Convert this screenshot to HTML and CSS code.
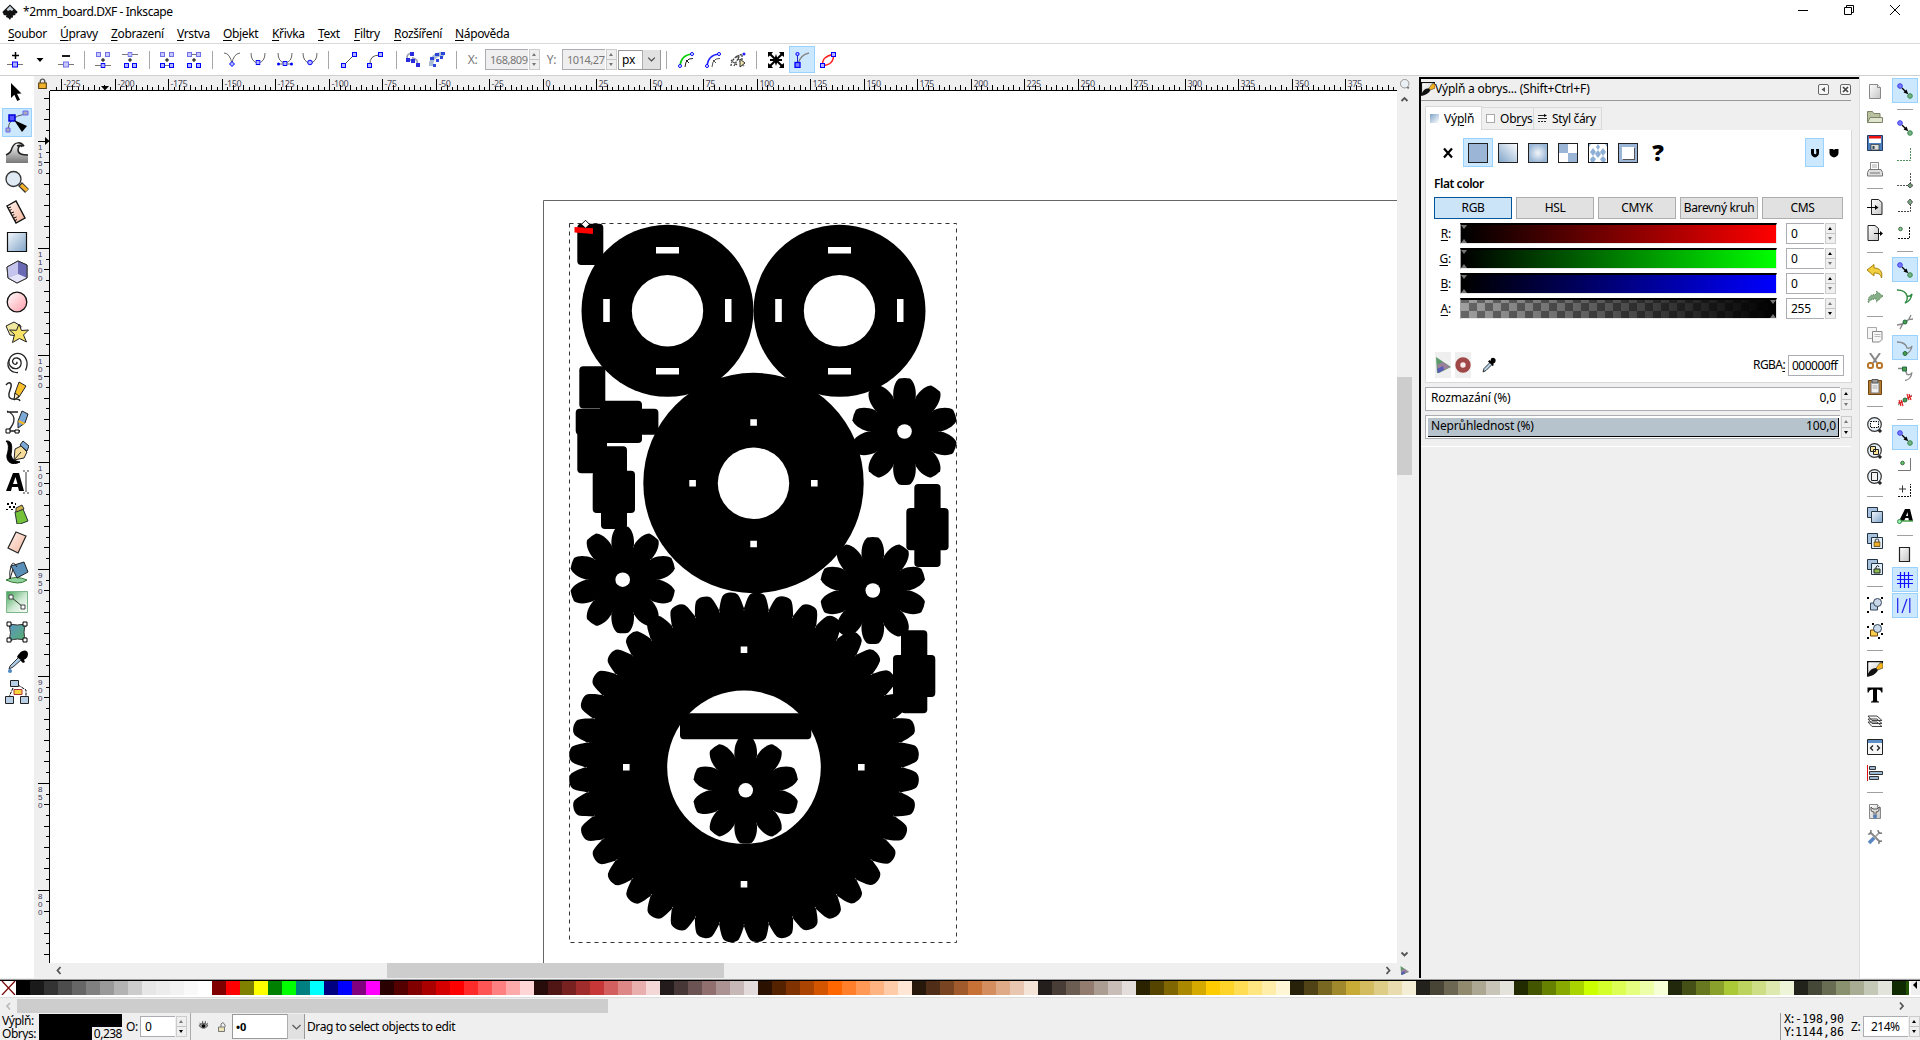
FILE: index.html
```html
<!DOCTYPE html>
<html lang="cs">
<head>
<meta charset="utf-8">
<title>*2mm_board.DXF - Inkscape</title>
<link rel="stylesheet" href="styles.css">
</head>
<body>
<svg class="defs" width="0" height="0">
  <defs>
    <linearGradient id="blue" x1="0" y1="0" x2="1" y2="1"><stop offset="0" stop-color="#f4f8fc"/><stop offset="1" stop-color="#7fa3c8"/></linearGradient>
    <linearGradient id="blueR" x1="0" y1="1" x2="1" y2="0"><stop offset="0" stop-color="#7fa3c8"/><stop offset="1" stop-color="#fff"/></linearGradient>
    <radialGradient id="rad"><stop offset="0" stop-color="#f2f6fb"/><stop offset="1" stop-color="#9bb7d6"/></radialGradient>
    <linearGradient id="pink" x1="0" y1="0" x2="1" y2="1"><stop offset="0" stop-color="#fff"/><stop offset="1" stop-color="#ff9ca8"/></linearGradient>
    <linearGradient id="skin" x1="0" y1="0" x2="1" y2="1"><stop offset="0" stop-color="#fff3ee"/><stop offset="1" stop-color="#f3b49c"/></linearGradient>
    <linearGradient id="green" x1="0" y1="0" x2="1" y2="1"><stop offset="0" stop-color="#3fa356"/><stop offset=".55" stop-color="#cfead4"/><stop offset="1" stop-color="#fff"/></linearGradient>
    <linearGradient id="grey" x1="0" y1="0" x2="1" y2="1"><stop offset="0" stop-color="#fff"/><stop offset="1" stop-color="#c4c4c4"/></linearGradient>
    <linearGradient id="wave" x1="0" y1="0" x2="0" y2="1"><stop offset="0" stop-color="#fff"/><stop offset="1" stop-color="#777"/></linearGradient>
    <linearGradient id="teal" x1="0" y1="0" x2="1" y2="1"><stop offset="0" stop-color="#5a93c4"/><stop offset="1" stop-color="#57b36a"/></linearGradient>
    <symbol id="n" viewBox="0 0 5 5"><rect x=".5" y=".5" width="4" height="4" fill="#b4b4ff" stroke="#00f"/></symbol>
    <symbol id="nf" viewBox="0 0 5 5"><rect x=".5" y=".5" width="4" height="4" fill="#c8c8ff" stroke="#7070e8"/></symbol>
    <symbol id="snap" viewBox="0 0 16 16"><circle cx="3" cy="3" r="2.3" fill="#7b7bff" stroke="#3a3adf"/><circle cx="13" cy="13" r="2.3" fill="#7ab08a" stroke="#2f8a43"/><path d="M5 5l4 4" stroke="#000" stroke-width="1.3"/><path d="M11.300 11.300L6.500 9.600l3-3z"/></symbol>
    <symbol id="brush" viewBox="0 0 16 16"><path d="M0 0h16v3L13 6 15 1.500 1.500 1.500V15H0z" fill="#111"/><path d="M1.500 1.500H13L1.500 13z" fill="url(#grey)"/><path d="M0 16c1-5 4-9 9-9l2 2c-2 4-6 6-11 7z" fill="#111"/><path d="M9 7l4-5 3 0v5l-5 2z" fill="#f5b21b" stroke="#333" stroke-width=".6"/></symbol>
    <symbol id="dropper" viewBox="0 0 16 16"><path d="M10 1.500c3-2 6 1 4 4L12 7l1 1-1.500 1L7 4.500 8.500 3l1 1z"/><path d="M8.500 6L3 11.500 2 15l3-1.500L10.500 8" fill="#b9d3e8" stroke="#333"/></symbol>
    <symbol id="page" viewBox="0 0 16 16"><path d="M2.500 1.500h8l3 3v11h-11z" fill="url(#grey)" stroke="#888"/><path d="M10.500 1.500v3h3" fill="#eee" stroke="#888"/></symbol>
    <symbol id="cms" viewBox="0 0 16 16"><path d="M1 0l15 10-12 6H2z" fill="#5c9a6c"/><path d="M2 8l6-3 7 5-11 5z" fill="#9a7f9a"/><path d="M2 12l6-3 1 4-6 3z" fill="#5a5ab8"/></symbol>
    <symbol id="lock" viewBox="0 0 8 10"><path d="M2 5V3a2 2 0 0 1 4 0v2" fill="none" stroke="#555" stroke-width="1.300"/><path d="M.5 4.500h7v5h-7z" fill="#efb02a" stroke="#5a4310"/></symbol>
    <symbol id="lens" viewBox="0 0 16 16"><path d="M11 12l3 3" stroke="#222" stroke-width="3"/><circle cx="7.500" cy="7.500" r="6.800" fill="#e8f1f8" stroke="#333" stroke-width="1.200"/></symbol>
  </defs>
</svg>

<header class="titlebar">
  <svg width="16" height="17" viewBox="0 0 16 17"><path d="M8 .5l7.300 7q.7 2-2.500 2.200l1 1.300-3 .6.300 2-2 .2L8 16l-1.600-2-2.600-1 .8-1.400-3-.5-.2-1.500Q0 9 .8 7.500z" fill="#111"/><path d="M8 2L4.500 5.500 6 7l2-1 2 1 1.500-1.500z" fill="#c9d3dc"/></svg>
  <span class="title">*2mm_board.DXF - Inkscape</span>
  <div class="winbtns">
    <svg width="12" height="12"><path d="M1 6.500h10" stroke="#000"/></svg>
    <svg width="12" height="12"><path d="M1.500 3.500h7v7h-7zM3.500 3.500v-2h7v7h-2" fill="none" stroke="#000"/></svg>
    <svg width="12" height="12"><path d="M1 1l10 10M11 1L1 11" stroke="#000"/></svg>
  </div>
</header>
<nav class="menubar">
  <span><u>S</u>oubor</span><span><u>Ú</u>pravy</span><span><u>Z</u>obrazení</span><span><u>V</u>rstva</span><span><u>O</u>bjekt</span><span><u>K</u>řivka</span><span><u>T</u>ext</span><span><u>F</u>iltry</span><span><u>R</u>ozšíření</span><span><u>N</u>ápověda</span>
</nav>

<div class="toolbar">
  <svg viewBox="0 0 16 16"><path d="M0 12.500h16" stroke="#777"/><path d="M5 3.500h7M8.500 0v7" stroke="#000" stroke-width="1.500"/><rect x="5.500" y="10" width="5" height="5" fill="#b4b4ff" stroke="#00f"/></svg>
  <svg viewBox="0 0 16 16"><path d="M4.500 6h7L8 10z"/></svg>
  <svg viewBox="0 0 16 16"><path d="M0 12.500h16" stroke="#777"/><path d="M4 4h8" stroke="#000" stroke-width="1.800"/><rect x="5.500" y="10" width="5" height="5" fill="#c8c8ff" stroke="#7070e8"/></svg>
  <i class="vsep"></i>
  <svg viewBox="0 0 16 16"><use href="#nf" x="1" y="0" width="5" height="5"/><use href="#nf" x="10" y="0" width="5" height="5"/><path d="M0 13.500h16" stroke="#777"/><path d="M8 6v4M6 8h4" stroke="#000"/><use href="#n" x="5.500" y="11" width="5" height="5"/></svg>
  <svg viewBox="0 0 16 16"><path d="M0 2.500h16" stroke="#777"/><use href="#nf" x="5.500" y="0" width="5" height="5"/><path d="M8 6v4M6 8h4" stroke="#000"/><use href="#n" x="2" y="11" width="5" height="5"/><use href="#n" x="10" y="11" width="5" height="5"/></svg>
  <i class="vsep"></i>
  <svg viewBox="0 0 16 16"><use href="#nf" x="1" y="0" width="5" height="5"/><use href="#nf" x="10" y="0" width="5" height="5"/><path d="M3 13.500h10" stroke="#777"/><path d="M8 6v4M6 8h4" stroke="#000"/><use href="#n" x="1" y="11" width="5" height="5"/><use href="#n" x="10" y="11" width="5" height="5"/></svg>
  <svg viewBox="0 0 16 16"><path d="M3 2.500h10" stroke="#777"/><use href="#nf" x="1" y="0" width="5" height="5"/><use href="#nf" x="10" y="0" width="5" height="5"/><path d="M8 6v4M6 8h4" stroke="#000"/><use href="#n" x="1" y="11" width="5" height="5"/><use href="#n" x="10" y="11" width="5" height="5"/></svg>
  <i class="vsep"></i>
  <svg viewBox="0 0 16 16"><path d="M0 1q6 0 8 11 1-10 8-11" fill="none" stroke="#666"/><path d="M8 9.500l2.500 2.500L8 14.500 5.500 12z" fill="#b4b4ff" stroke="#00f"/></svg>
  <svg viewBox="0 0 16 16"><path d="M1 1q0 9 7 10 7-1 7-10" fill="none" stroke="#666"/><use href="#n" x="5.500" y="8" width="5" height="5"/></svg>
  <svg viewBox="0 0 16 16"><path d="M1 1q0 9 7 10 7-1 7-10M1 12h14" fill="none" stroke="#666"/><use href="#n" x="5.500" y="9" width="5" height="5"/><circle cx="1.500" cy="12" r="1.500" fill="#00f"/><circle cx="14.500" cy="12" r="1.500" fill="#00f"/></svg>
  <svg viewBox="0 0 16 16"><path d="M1 1q0 9 7 10 7-1 7-10" fill="none" stroke="#666"/><circle cx="8" cy="10.500" r="2.300" fill="#b4b4ff" stroke="#00f"/></svg>
  <i class="vsep"></i>
  <svg viewBox="0 0 16 16"><path d="M3 13L13 3" stroke="#555"/><use href="#n" x="0" y="11" width="5" height="5"/><use href="#n" x="11" y="0" width="5" height="5"/></svg>
  <svg viewBox="0 0 16 16"><path d="M3 13Q2 3 13 3" fill="none" stroke="#555"/><use href="#n" x="0" y="11" width="5" height="5"/><use href="#n" x="11" y="0" width="5" height="5"/></svg>
  <i class="vsep"></i>
  <svg viewBox="0 0 16 16"><path d="M8 1.500C1 1 0 8 6 8M7 6q7 1 5 7" fill="none" stroke="#9aa3b8" stroke-width="1.800"/><g fill="#2a2adf"><path d="M5 0h4v4H5zM1 6h4v4H1zM6 7h4v4H6zM11 11h4v4h-4z"/></g></svg>
  <svg viewBox="0 0 16 16"><path d="M2 14c0-9 5-12 13-12" fill="none" stroke="#a9bad6" stroke-width="4.500"/><g fill="#2a46d8"><path d="M1 5h4v3H1zM6 1h4v3H6zM12 0h4v3h-4zM7 7h3v3H7zM4 12h3v3H4zM11 4h3v3h-3z"/></g></svg>
  <i class="vsep"></i>
  <label class="dim">X:</label>
  <div class="entry dim off"><b>168,809</b><i class="spin"></i></div>
  <label class="dim">Y:</label>
  <div class="entry dim off"><b>1014,27</b><i class="spin"></i></div>
  <div class="combo">px<svg width="18" height="19" viewBox="0 0 18 19"><path d="M5.500 7.500L9 11l3.500-3.500" fill="none" stroke="#444" stroke-width="1.200"/></svg></div>
  <i class="vsep"></i>
  <svg viewBox="0 0 16 16"><path d="M2 14Q3 3 14 2" fill="none" stroke="#0c0" stroke-width="1.600"/><path d="M7 15q0-6 4-8l4-.5M8 8l3 3" fill="none" stroke="#222"/><circle cx="2" cy="14" r="1.500" fill="#fff" stroke="#00f"/><circle cx="14" cy="2" r="1.500" fill="#fff" stroke="#00f"/></svg>
  <svg viewBox="0 0 16 16"><path d="M2 14Q3 3 14 2" fill="none" stroke="#22f" stroke-width="1.400"/><path d="M7 15q0-6 4-8l4-.5M8 8l3 3" fill="none" stroke="#555"/><circle cx="2" cy="14" r="1.500" fill="#fff" stroke="#00f"/><circle cx="14" cy="2" r="1.500" fill="#fff" stroke="#00f"/></svg>
  <svg viewBox="0 0 16 16"><path d="M1 14Q2 4 14 2M4 14L10 3M1 8l6 5M6 4l8 10M12 3v11" fill="none" stroke="#444" stroke-width="1.300" stroke-dasharray="2 1"/><path d="M10 7l5 4-5 4z" fill="#eadfa8" stroke="#333"/><circle cx="14" cy="2" r="1.500" fill="#22f"/></svg>
  <i class="vsep"></i>
  <svg viewBox="0 0 16 16"><path d="M0 0h5l-1.500 2L7 5.500V2l1 3 1-3v3.500L12.500 2 11 0h5v5l-2-1.500L10.500 7H14v2h-3.500l3.500 3.500 2-1.500v5h-5l1.500-2L9 10.500V14l-1-3-1 3v-3.500L3.500 14 5 16H0v-5l2 1.500L5.500 9H2V7h3.500L2 3.500 0 5z"/></svg>
  <div class="on"><svg viewBox="0 0 16 16"><path d="M4 12Q6 3 15 1" fill="none" stroke="#888" stroke-width="1.300"/><path d="M3.500 12V2" stroke="#22c"/><circle cx="3.500" cy="2" r="1.600" fill="#b4b4ff" stroke="#00f"/><rect x="1" y="10.500" width="5" height="5" fill="#7b7bff" stroke="#00f" stroke-width="1.300"/></svg></div>
  <svg viewBox="0 0 16 16"><path d="M2.500 13.500Q2 4 13.500 2.500M2.500 13.500Q14 13 13.500 2.500" fill="none" stroke="#f22" stroke-width="1.500"/><use href="#n" x="0" y="11" width="5" height="5"/><use href="#n" x="11" y="0" width="5" height="5"/></svg>
</div>

<main class="main">
  <aside class="toolbox">
    <div><svg viewBox="0 0 24 24"><path d="M6 3l10.500 10.500-4.500.2 3 6-2.800 1.300-2.800-6.200L6 18z"/></svg></div>
    <div class="on"><svg viewBox="0 0 24 24"><path d="M3 20Q3 7 20 4" fill="none" stroke="#555"/><path d="M1 18h4v4H1zM18 1h5v4h-5z" fill="#aab" stroke="#66e"/><path d="M4 5h6v6H4z" fill="#55f" stroke="#00d" stroke-width="1.500"/><path d="M9 10l13 6-5 6z"/></svg></div>
    <div><svg viewBox="0 0 24 24"><path d="M1 15Q7 13 8 7c2-5 9-6 11-1-3-1-4 2-5 4-1 5 5 5 9 5v8H1z" fill="url(#wave)"/><path d="M1 15Q6 13 7 8C10 1 16 2 19 6c-4-2-6 1-6 4 0 5 6 5 10 5M12 6q4-2 5 1" fill="none" stroke="#222" stroke-width="1.500"/></svg></div>
    <div><svg viewBox="0 0 24 24"><path d="M15 14l7 7" stroke="#333" stroke-width="5.500"/><path d="M16 15l6 5.500" stroke="#f2b02c" stroke-width="3.500"/><circle cx="8.500" cy="9" r="7.500" fill="#dfeaf4" stroke="#333" stroke-width="1.300"/></svg></div>
    <div><svg viewBox="0 0 24 24"><path d="M2 6l9-5 9 17-9 5z" fill="url(#skin)" stroke="#111" stroke-width="1.400"/><path d="M3 8l3-1M4.500 10.500l2-1M6 13l3-1M7.300 15.500l2-1M8.600 18l3-1M10 20.500l2-1" stroke="#111"/></svg></div>
    <div><svg viewBox="0 0 24 24"><path d="M2.500 2.500h19v19h-19z" fill="url(#blue)" stroke="#111" stroke-width="1.200"/></svg></div>
    <div><svg viewBox="0 0 24 24"><path d="M2 7l11-6 9 4v13l-10 5-9-5z" fill="#9a9ad8" stroke="#333"/><path d="M2 7l11-6v13L3 18z" fill="#c4c4ec"/><path d="M13 1l9 4v13l-9-4z" fill="#6a6ab4"/><path d="M3 18l10-4 9 4-10 5z" fill="#e4e4fa"/><path d="M2 7l11-6 9 4v13l-10 5-9-5z" fill="none" stroke="#333"/></svg></div>
    <div><svg viewBox="0 0 24 24"><circle cx="12" cy="12" r="9.800" fill="url(#pink)" stroke="#111" stroke-width="1.300"/></svg></div>
    <div><svg viewBox="0 0 24 24"><path d="M1 6l8-4 7 4-2 10-9-1z" fill="#f2e9a0" stroke="#222"/><path d="M14 4l2.500 6.500 7-.5-5 5 3 7-7-3.500-7 4 2-8-5-4.500 7 .3z" fill="#f7e268" stroke="#222"/></svg></div>
    <div><svg viewBox="0 0 24 24"><path d="M11.500 12c1.500 1-.5 3-2.300 2C6 12 8 7.500 12 8c5.500 1 5.500 9 0 10.500C6 19.500 2.500 14 4.500 9 7 3 14 2 18.500 5.500 23 10 22.500 16 20.500 20.500M11.500 12c1 .5.500 1.500-.5 1.500" fill="none" stroke="#222" stroke-width="1.300"/><path d="M4.500 9C0 17 6 23 13 22.500" fill="none" stroke="#222" stroke-width="1.300"/></svg></div>
    <div><svg viewBox="0 0 24 24"><path d="M1 5c3-4 6-2 5 2s-4 8-1 11 9-1 10 3" fill="none" stroke="#222" stroke-width="1.400"/><path d="M10 13l4-11 7 4-7 11-5 3z" fill="#f7c02a" stroke="#222"/><path d="M10 13l4 3-5 4z" fill="#fbe7c0" stroke="#222"/></svg></div>
    <div><svg viewBox="0 0 24 24"><path d="M2 1c7 3 11 9 1 20M2 21h13M2 2l11 0" fill="none" stroke="#222" stroke-width="1.300"/><path d="M13 18l0-7 4-10 6 3-3 9z" fill="#7ca9d6" stroke="#222"/><path d="M14 10l6 3-1 2-6-3z" fill="#f4b62a"/><path d="M1 19h4v4H1zM10 20h4v3h-4z" fill="#fff" stroke="#000"/></svg></div>
    <div><svg viewBox="0 0 24 24"><path d="M1 1c7-1 6 8 5 13 0 5 4 7 9 8C7 26 1 22 2 15 4 8 4 4 1 1z" stroke="#000"/><path d="M9 20l1-11 6-3 6 6-3 6z" fill="#f5dc9a" stroke="#222"/><path d="M15 5l3-4 6 5-2 5z" fill="#7ca9d6" stroke="#222"/><path d="M9 20l7-8" stroke="#222"/></svg></div>
    <div><svg viewBox="0 0 24 24"><path d="M1 21L8 3h6l5 18h-5l-1-4H7l-1 4zM8 14h4.500L10.500 7z"/><path d="M18 1h2M22 1h2M21 2v20M18 23h2M22 23h2" stroke="#333" fill="none"/></svg></div>
    <div><svg viewBox="0 0 24 24"><path d="M10 12l8-3 5 12-8 3h-3z" fill="#74c13a" stroke="#233"/><path d="M11 8l6-3 2 4-8 3z" fill="#c9b14c" stroke="#333"/><path d="M2 3h2v2H2zM6 2h2v2H6zM4 6h2v2H4zM8 6h2v2H8zM1 9h2v1H1zM6 9h2v1H6zM10 3h1v2h-1z"/></svg></div>
    <div><svg viewBox="0 0 24 24"><path d="M11 2l10 4-8 17-10-5z" fill="url(#skin)" stroke="#222" stroke-width="1.200"/></svg></div>
    <div><svg viewBox="0 0 24 24"><path d="M1 20q10-5 21 0-8 6-21 0z" fill="#8fd19c" stroke="#373"/><path d="M6 6l13-4 4 10-11 6z" fill="#5a90b8" stroke="#222"/><path d="M6 6q-2 6-1 13l3-10M6 6q2-6 6 1" fill="none" stroke="#222"/></svg></div>
    <div><svg viewBox="0 0 24 24"><path d="M1.500 1.500h21v21h-21z" fill="url(#green)" stroke="#7cb68a"/><path d="M6 7l12 10" stroke="#333"/><path d="M4 5h4v4H4zM16 15h4v4h-4z" fill="#fff" stroke="#444"/></svg></div>
    <div><svg viewBox="0 0 24 24"><path d="M4 4q8 2 17 0-4 8 0 17-8-4-17 0 3-8 0-17z" fill="url(#teal)" stroke="#333"/><path d="M2 2h4v4H2zM18 2h4v4h-4zM2 18h4v4H2zM18 18h4v4h-4z" fill="#fff" stroke="#000"/></svg></div>
    <div><svg viewBox="0 0 24 24"><path d="M14 4c4-5 9-4 9 0s-3 5-4 6l1 2-2 1-6-6 1-2z"/><path d="M13 8L5 16l-1 3 4-2 8-7" fill="#a9cbe8" stroke="#333"/><circle cx="5" cy="21" r="2" fill="#4d86c0"/></svg></div>
    <div><svg viewBox="0 0 24 24"><path d="M8 8L4 17M13 5l8 5v7" fill="none" stroke="#000" stroke-dasharray="3 1"/><path d="M5.500.5h8v6h-8zM.5 16.500h8v7h-8zM15.500 16.500h8v7h-8z" fill="#b8cfe6" stroke="#222"/><path d="M9 9.500h8v5H9z" fill="#f7d33c" stroke="#a33"/></svg></div>
  </aside>

  <section class="editor">
    <div class="corner"><svg width="9" height="11" viewBox="0 0 8 10"><use href="#lock"/></svg></div>
    <svg class="hruler" viewBox="50 76 1347 15"><g id="hr"></g></svg>
    <div class="corner"><svg width="10" height="10" viewBox="0 0 16 16"><use href="#lens" opacity=".6"/></svg></div>
    <svg class="vruler" viewBox="34 91 16 872"><g id="vr"></g></svg>
    <svg class="canvas" viewBox="50 91 1347 872">
      <path d="M543.500 963V200.500H1397" fill="none" stroke="#666"/>
      <g id="shapes">
        <circle cx="667.500" cy="310.800" r="86"/><circle cx="839.500" cy="310.800" r="86"/><circle cx="753.500" cy="483" r="110.200"/>
        <rect x="577.300" y="223.700" width="26" height="41.300" rx="4"/>
        <rect x="579.300" y="366.300" width="26" height="42.300" rx="4"/>
        <rect x="600" y="400.700" width="42" height="42.300" rx="4"/>
        <rect x="575.700" y="408.700" width="82.700" height="26" rx="4"/>
        <rect x="577.300" y="428" width="26" height="45.300" rx="4"/>
        <rect x="601" y="446.300" width="26" height="82.700" rx="4"/>
        <path d="M595 440h12v12h-12z"/>
        <rect x="592.700" y="470.700" width="42.300" height="42.300" rx="4"/>
        <rect x="914.300" y="484" width="26.300" height="83" rx="4"/><rect x="906.300" y="508" width="42.300" height="42.300" rx="4"/>
        <rect x="901" y="630.300" width="26.300" height="83" rx="4"/><rect x="893" y="655" width="42.300" height="42" rx="4"/>
      </g>
      <g fill="#fff">
        <circle cx="667.500" cy="310.700" r="35.700"/><circle cx="839.500" cy="310.700" r="35.700"/><circle cx="753.500" cy="483.300" r="35.700"/>
        <path d="M656 247h23v6.500h-23zM656 368h23v6.500h-23zM603.200 299h6.600v23h-6.600zM725 299h6.500v23h-6.500z"/>
        <path d="M828 247h23v6.500h-23zM828 368h23v6.500h-23zM775.200 299h6.600v23h-6.600zM897 299h6.500v23h-6.500z"/>
        <path d="M750.300 419.200h6.600v6.600h-6.600zM750.300 540.700h6.600v6.600h-6.600zM689.300 480h6.600v6.600h-6.600zM811 480h6.600v6.600h-6.600z"/>
      </g>
      <g id="gears"></g>
      <rect x="569.500" y="223.500" width="387" height="719" fill="none" stroke="#333" stroke-dasharray="4 4"/>
      <path d="M574.500 227l18.500 1.300v5.700l-18.500-1.600z" fill="#f00"/>
      <path d="M585.500 220.300l4 4-4 4-4-4z" fill="#fff" stroke="#000"/>
    </svg>
    <div class="vscroll"><svg width="15" height="15"><path d="M4.500 10L7.500 7l3 3" fill="none" stroke="#555" stroke-width="1.800"/></svg><i></i><svg width="15" height="15"><path d="M4.500 4.500l3 3 3-3" fill="none" stroke="#555" stroke-width="1.800"/></svg></div>
    <div class="corner"></div>
    <div class="hscroll"><svg width="15" height="15"><path d="M10.500 4l-3 3.500 3 3.500" fill="none" stroke="#555" stroke-width="1.800"/></svg><i></i><svg width="15" height="15"><path d="M4.500 4l3 3.500-3 3.500" fill="none" stroke="#555" stroke-width="1.800"/></svg></div>
    <div class="corner"><svg width="9" height="9" viewBox="0 0 16 16"><use href="#cms"/></svg></div>
  </section>

  <section class="dock">
    <div class="dockhead">
      <svg width="14" height="14" viewBox="0 0 16 16"><use href="#brush"/></svg><span>Výplň a obrys... (Shift+Ctrl+F)</span>
      <svg class="hb" width="11" height="11"><rect x=".5" y=".5" width="10" height="10" rx="1.500" fill="#f6f6f6" stroke="#666"/><path d="M7 3v5L3.500 5.500z" fill="#555"/></svg>
      <svg class="hb" width="11" height="11"><rect x=".5" y=".5" width="10" height="10" rx="1.500" fill="#f6f6f6" stroke="#666"/><path d="M3 3l5 5M8 3L3 8" stroke="#444" stroke-width="1.700"/></svg>
    </div>
    <div class="tabs">
      <div class="tab cur"><svg width="9" height="9"><rect width="9" height="9" fill="url(#blueR)" transform="rotate(90 4.500 4.500)"/></svg><span>Vý<u>p</u>lň</span></div>
      <div class="tab"><svg width="9" height="9"><rect x=".5" y=".5" width="8" height="8" fill="#fff" stroke="#aaa"/></svg><span>Ob<u>r</u>ys</span></div>
      <div class="tab"><svg width="9" height="9"><path d="M0 1.500h7M0 4.500h9" stroke="#222"/><path d="M6 0l3 1.500L6 3z"/><path d="M0 7.500h9" stroke="#222" stroke-dasharray="2 1"/></svg><span>Styl čáry</span></div>
    </div>
    <div class="sheet">
      <div class="paints">
        <div><svg width="10" height="12"><path d="M1 1.500l8 9M9 1.500l-8 9" stroke="#000" stroke-width="2.200"/></svg></div>
        <div class="on"><svg width="20" height="20"><rect x=".5" y=".5" width="19" height="19" fill="#9bb5d6" stroke="#222"/></svg></div>
        <div><svg width="20" height="20"><rect x=".5" y=".5" width="19" height="19" fill="url(#blueR)" stroke="#222"/></svg></div>
        <div><svg width="20" height="20"><rect x=".5" y=".5" width="19" height="19" fill="url(#rad)" stroke="#222"/></svg></div>
        <div><svg width="20" height="20"><rect x=".5" y=".5" width="19" height="19" fill="#fff" stroke="#222"/><path d="M1 1h9v18h9v-9H1z" fill="#9bb5d6"/></svg></div>
        <div><svg width="20" height="20"><rect x=".5" y=".5" width="19" height="19" fill="#fff" stroke="#111"/><path d="M5 5l3 4-3 4-3-4zM15 5l3 4-3 4-3-4zM10 7l3 4-3 4-3-4zM10 1l2 3-2 3-2-3zM5 13l3 3-2 3H3l-1-3zM15 13l3 3-1 3h-3l-2-3zM1 1h2L1 4zM19 1v3l-2-3z" fill="#8fb0d6"/></svg></div>
        <div><svg width="20" height="20"><rect x=".5" y=".5" width="19" height="19" fill="#9bb5d6" stroke="#222"/><path d="M5 5h12v12H5z" fill="#555"/><path d="M4 4h12v12H4z" fill="#fff"/></svg></div>
        <div class="q">?</div>
        <div class="rule on"><svg width="10" height="10"><path d="M1 1h3v4a1.200 1.200 0 0 0 2.400 0L6 1h3v4q0 3-4 4.500Q1 8 1 5z"/></svg></div>
        <div class="rule"><svg width="10" height="10"><path d="M.5 1H4l1 1 1-1h3.500v4q0 3-4.500 4.500Q.5 8 .5 5z"/></svg></div>
      </div>
      <div class="flat">Flat color</div>
      <div class="modes"><div class="sel">RGB</div><div>HSL</div><div>CMYK</div><div>Barevný kruh</div><div>CMS</div></div>
      <div class="slider"><label><u>R</u>:</label><div class="bar r"></div><div class="entry"><b>0</b><i class="spin up"></i></div></div>
      <div class="slider"><label><u>G</u>:</label><div class="bar g"></div><div class="entry"><b>0</b><i class="spin up"></i></div></div>
      <div class="slider"><label><u>B</u>:</label><div class="bar b"></div><div class="entry"><b>0</b><i class="spin up"></i></div></div>
      <div class="slider"><label><u>A</u>:</label><div class="bar a"></div><div class="entry"><b>255</b><i class="spin down"></i></div></div>
      <div class="rgba">
        <span class="chip"><svg width="16" height="16" viewBox="0 0 16 16"><use href="#cms"/></svg></span>
        <span class="chip"><svg width="16" height="16"><circle cx="8" cy="8" r="5.200" fill="#f8eaea" stroke="#a04848" stroke-width="5"/></svg></span>
        <svg class="drop" width="16" height="16" viewBox="0 0 16 16"><use href="#dropper"/></svg>
        <label>RGBA<u>:</u></label><div class="entry"><b>000000ff</b></div>
      </div>
    </div>
    <div class="blur"><div><span>Rozmazání (%)</span><span>0,0</span></div><i class="spin up"></i></div>
    <div class="blur full"><div><span>Neprůhlednost (%)</span><span>100,0</span></div><i class="spin down"></i></div>
    <div class="dockend"></div>
  </section>

  <aside class="side">
    <div class="cmds">
      <div><svg viewBox="0 0 16 16"><use href="#page"/></svg></div>
      <div><svg viewBox="0 0 16 16"><path d="M.5 13.500v-11h5l1.500 2h6v4" fill="#b9c0a0" stroke="#7c8466"/><path d="M3 8.500h12.500v5H.5z" fill="#dfe4cf" stroke="#7c8466"/></svg></div>
      <div><svg viewBox="0 0 16 16"><path d="M.5.500h15v15h-15z" fill="#4c7fc0" stroke="#223c66"/><path d="M2 1h12v7H2z" fill="#fff"/><path d="M2 1h12v2.500H2z" fill="#e11"/><path d="M4 9.500h8V15H4z" fill="#ddd" stroke="#333" stroke-width=".7"/><path d="M5.500 11h2v3h-2z" fill="#345"/></svg></div>
      <div><svg viewBox="0 0 16 16"><path d="M3.500 8V1.500h8V8" fill="#fff" stroke="#888"/><path d="M5 4h5M5 6h5" stroke="#aaa"/><path d="M2 8.500h12l1.500 3v3.500H.5v-3.500z" fill="#ddd" stroke="#777"/><path d="M3 12h10" stroke="#777"/></svg></div>
      <hr>
      <div><svg viewBox="0 0 16 16"><path d="M4.500.5h7l3.500 3v12H4.500z" fill="url(#grey)" stroke="#222"/><path d="M0 8.500h9" stroke="#000"/><path d="M8 6l3.500 2.500L8 11z"/></svg></div>
      <div><svg viewBox="0 0 16 16"><path d="M1 .5h7l3.500 3v12H1z" fill="url(#grey)" stroke="#222"/><path d="M7 8.500h7" stroke="#000"/><path d="M13 6l3 2.500-3 2.500z"/></svg></div>
      <hr>
      <div><svg viewBox="0 0 16 16"><path d="M0 7l7-5.500V5c6 0 9 4 7.500 10-1-4-3-5-7.500-5v3z" fill="#f1cf3e" stroke="#a8820c"/></svg></div>
      <div><svg viewBox="0 0 16 16"><path d="M16 7L9.500 2v3.500C4 5 0 8 1.500 14c1-3 4-4 8-4v3z" fill="#86ae86" stroke="#5a805a" stroke-dasharray="1 1"/></svg></div>
      <hr>
      <div><svg viewBox="0 0 16 16"><path d="M.5.500h9v11h-9z" fill="#f6f6f6" stroke="#aaa"/><path d="M5.500 4.500h9.500v8L12.500 15h-7z" fill="#f6f6f6" stroke="#888"/><path d="M7.500 7.500h6M7.500 9.500h6" stroke="#bbb"/></svg></div>
      <div><svg viewBox="0 0 16 16"><path d="M3 0l7 10M13 0L6 10" stroke="#888" stroke-width="2"/><rect x="1" y="10" width="5" height="5" rx="2" fill="none" stroke="#b9762a" stroke-width="2"/><rect x="10" y="10" width="5" height="5" rx="2" fill="none" stroke="#b9762a" stroke-width="2"/></svg></div>
      <div><svg viewBox="0 0 16 16"><path d="M1.500 1.500h13v14h-13z" fill="#b87a2c" stroke="#6e4412"/><path d="M4 3h8v11H4z" fill="#f0f0f0" stroke="#777"/><path d="M5 .5h6V4H5z" fill="#999" stroke="#555"/><path d="M5.500 7h5M5.500 9h5" stroke="#aaa"/></svg></div>
      <hr>
      <div><svg viewBox="0 0 16 16"><use href="#lens"/><path d="M3.500 4.500h8v6h-8z" fill="#fff" stroke="#000" stroke-dasharray="1.500 1"/></svg></div>
      <div><svg viewBox="0 0 16 16"><use href="#lens"/><path d="M3.500 3.500h5v5h-5zM6.500 6.500h5v5h-5z" fill="#fbe59a" stroke="#222"/></svg></div>
      <div><svg viewBox="0 0 16 16"><use href="#lens"/><path d="M4.500 3.500h6v8h-6z" fill="#f4f4f4" stroke="#222"/></svg></div>
      <hr>
      <div><svg viewBox="0 0 16 16"><path d="M.5.500h10v10h-10z" fill="#a9c3df" stroke="#234"/><path d="M4.500 4.500h11v11h-11z" fill="url(#blue)" stroke="#234"/></svg></div>
      <div><svg viewBox="0 0 16 16"><path d="M.5.500h10v10h-10z" fill="#a9c3df" stroke="#234"/><path d="M4.500 4.500h11v11h-11z" fill="#e3edf6" stroke="#234"/><use href="#lock" x="6.500" y="5" width="7" height="9"/></svg></div>
      <div><svg viewBox="0 0 16 16"><path d="M.5.500h10v10h-10z" fill="#a9c3df" stroke="#234"/><path d="M4.500 4.500h11v11h-11z" fill="#e3edf6" stroke="#234"/><path d="M7 10h6v4H7z" fill="#8cc152" stroke="#222"/><path d="M9 10V8q2-3 3 0" fill="none" stroke="#222"/></svg></div>
      <hr>
      <div><svg viewBox="0 0 16 16"><path d="M3.500 6h7v7h-7z" fill="#b9cee4" stroke="#345"/><circle cx="10.500" cy="5.500" r="4" fill="#c9d9ea" stroke="#345"/><path d="M0 0h2v2H0zM14 0h2v2h-2zM0 14h2v2H0zM14 14h2v2h-2z"/></svg></div>
      <div><svg viewBox="0 0 16 16"><path d="M3.500 7h7v6h-7z" fill="#f7cf4c" stroke="#740"/><circle cx="10.500" cy="5.500" r="4" fill="#c9d9ea" stroke="#345"/><path d="M0 3h2v2H0zM5 0h2v2H5zM14 0h2v2h-2zM0 14h2v2H0zM14 10h2v2h-2zM11 14h2v2h-2z"/></svg></div>
      <hr>
      <div><svg viewBox="0 0 16 16"><use href="#brush"/></svg></div>
      <div><svg viewBox="0 0 16 16"><path d="M.5.500h15v5h-1.200Q14 2.500 10 2.500V13q0 1.500 2 1.500v1H4v-1q2 0 2-1.500V2.500Q2 2.500 1.700 5.500H.5z"/></svg></div>
      <div><svg viewBox="0 0 16 16"><path d="M1 9h9l5 4.500H5zM1 6h9l5 4.500H5zM1 3h9l5 4.500H5z" fill="#f4f4f4" stroke="#333" stroke-width=".9"/></svg></div>
      <div><svg viewBox="0 0 16 16"><path d="M.5.500h15v15h-15z" fill="#f6f6f6" stroke="#222"/><path d="M1 1h14v3H1z" fill="#5c8fc8"/><path d="M6 6.500L3.500 9 6 11.500M10 6.500L12.500 9 10 11.500" fill="none" stroke="#222" stroke-width="1.300"/></svg></div>
      <div><svg viewBox="0 0 16 16"><path d="M.5 0v16" stroke="#d11"/><path d="M2.500 1.500h6v3h-6zM2.500 6.500h13v3h-13zM2.500 11.500h9v3h-9z" fill="#9cb9d6" stroke="#333"/></svg></div>
      <hr>
      <div><svg viewBox="0 0 16 16"><use href="#page"/><path d="M4 4v3q0 2 3 2v5h2V9q3 0 3-2V4l-2 2H6z" fill="#ddd" stroke="#555"/><path d="M6.500 12h3v3.500h-3z" fill="#4c7fc0"/></svg></div>
      <div><svg viewBox="0 0 16 16"><path d="M3 3l10 10" stroke="#888" stroke-width="2"/><path d="M13 3L6 10" stroke="#999" stroke-width="1.600"/><path d="M7 9l-5 5" stroke="#5a86c4" stroke-width="3.500"/><path d="M1 5q3 1 3-4M12 15q-1-3 3-3M11 1q0 4 4 3" fill="none" stroke="#777" stroke-width="1.400"/></svg></div>
    </div>
    <div class="snaps">
      <div class="on"><svg viewBox="0 0 16 16"><use href="#snap"/></svg></div><hr>
      <div><svg viewBox="0 0 16 16"><use href="#snap"/></svg></div>
      <div><svg viewBox="0 0 16 16"><path d="M0 14.500h13.500V2" fill="none" stroke="#4f8f5c" stroke-dasharray="2 1"/></svg></div>
      <div><svg viewBox="0 0 16 16"><path d="M0 13.500h13.500V1" fill="none" stroke="#555" stroke-dasharray="2 1"/><path d="M13 11l3 2.500-3 2.500-2.500-2.500z" fill="#6c9a74" stroke="#555"/></svg></div>
      <div><svg viewBox="0 0 16 16"><path d="M1 13.500h12.500V6" fill="none" stroke="#444" stroke-dasharray="2 1"/><path d="M13 1l2.500 3L13 7l-2.500-3z" fill="#7aa883" stroke="#555"/></svg></div>
      <div><svg viewBox="0 0 16 16"><path d="M1 14.500h11.500V2" fill="none" stroke="#111" stroke-dasharray="2 1"/><circle cx="3.500" cy="5" r="1.800" fill="#8c9" stroke="#464"/></svg></div><hr>
      <div class="on"><svg viewBox="0 0 16 16"><use href="#snap"/></svg></div>
      <div><svg viewBox="0 0 16 16"><path d="M0 2C6 2 9 4 10 8q3 1 5-2-1 7-7 9 3-3 2-7" fill="none" stroke="#2f8a43" stroke-width="1.400"/></svg></div>
      <div><svg viewBox="0 0 16 16"><path d="M0 11Q11 10 14 1M3 15Q7 5 16 5" fill="none" stroke="#888" stroke-width="1.300"/><circle cx="8" cy="8" r="2" fill="#4aa04a" stroke="#264"/></svg></div>
      <div class="on"><svg viewBox="0 0 16 16"><path d="M0 2C6 2 9 4 10 8q3 1 5-2-1 6-6 8" fill="none" stroke="#888" stroke-width="1.300"/><circle cx="8" cy="13.500" r="2" fill="#4aa04a" stroke="#264"/></svg></div>
      <div><svg viewBox="0 0 16 16"><path d="M1 2.500h6q2 2 3 6 3 1 5-2-1 7-7 8" fill="none" stroke="#888" stroke-width="1.300"/><path d="M5.500 1h4v4h-4z" fill="#4aa04a" stroke="#264"/></svg></div>
      <div><svg viewBox="0 0 16 16"><path d="M1 13L15 3" stroke="#777"/><path d="M2 8l2 6M4 8l2 6M10 2l2 6M12 2l2 6M1 11l5-1M10 6l5-2" stroke="#d22" stroke-width="1.200"/><circle cx="8" cy="8" r="2" fill="#4aa04a" stroke="#264"/></svg></div><hr>
      <div class="on"><svg viewBox="0 0 16 16"><use href="#snap"/></svg></div>
      <div><svg viewBox="0 0 16 16"><path d="M1 14.500h12.500V2" fill="none" stroke="#777"/><circle cx="5.500" cy="7" r="1.800" fill="#5c6" stroke="#464"/></svg></div>
      <div><svg viewBox="0 0 16 16"><path d="M1 14.500h12.500V2" fill="none" stroke="#111" stroke-dasharray="2 1"/><path d="M5.500 3.500v7M2 7h7" stroke="#333"/></svg></div>
      <div><svg viewBox="0 0 16 16"><path d="M2 13L8 1h5l3 12h-4l-.6-3H8.500L7 13zM9 8h2l-.5-4z"/><path d="M3 13h13" stroke="#4aa04a" stroke-width="1.500"/><circle cx="2.500" cy="13.500" r="2" fill="#9cf0b0" stroke="#2f8a43"/></svg></div><hr>
      <div><svg viewBox="0 0 16 16"><path d="M2.500 1.500h10v14h-10z" fill="url(#grey)" stroke="#222" stroke-width="1.200"/></svg></div>
      <div class="on"><svg viewBox="0 0 16 16"><path d="M3.500 0v16M7.500 0v16M11.500 0v16M0 3.500h16M0 7.500h16M0 11.500h16" stroke="#11f" stroke-width="1.200"/></svg></div>
      <div class="on"><svg viewBox="0 0 16 16"><path d="M.7 0v15M12.800 0v15M5 15L10 1" stroke="#22e" stroke-width="1.200"/></svg></div>
    </div>
  </aside>
</main>

<div class="palette"><svg class="none" width="15" height="14"><path d="M0 0h15v14H0z" fill="#fff"/><path d="M1 0l13 14M14 0L1 14" stroke="#7a0c0c" stroke-width="1.300"/></svg><div id="swatches"></div><svg width="9" height="14"><path d="M6 0v8L2 4z"/></svg></div>
<div class="palscroll"><svg width="17" height="14"><path d="M10 4L7 7l3 3.500" fill="none" stroke="#bbb" stroke-width="1.700"/></svg><i></i><svg width="17" height="14"><path d="M6 3.500L9 7l-3 3.500" fill="none" stroke="#555" stroke-width="1.800"/></svg></div>

<footer class="status">
  <div class="fs"><span>Výplň:</span><span>Obrys:</span></div>
  <div class="black"><span>0,238</span></div>
  <label class="ol">O:</label><div class="entry op"><b>0</b><i class="spin down"></i></div>
  <i class="vline"></i>
  <svg class="eye" width="11" height="11" viewBox="0 0 12 12"><path d="M1 6q5-5 10 0-5 6-10 0z" fill="#999" stroke="#555"/><path d="M2 3l1 2M5 1v3M8 1v3M10.500 3l-1 2" stroke="#555"/><circle cx="6" cy="6.500" r="2"/></svg>
  <svg class="lk" width="8" height="10" viewBox="0 0 8 10"><path d="M3 5V2q2-3 4 1v2" fill="none" stroke="#777"/><path d="M.5 5h6v4.500h-6z" fill="#ece6b4" stroke="#777"/></svg>
  <div class="combo layer"><b>•0</b><svg width="17" height="25"><path d="M4.500 11l4 4 4-4" fill="none" stroke="#555" stroke-width="1.200"/></svg></div>
  <span class="msg">Drag to select objects to edit</span>
  <div class="coords"><div><span>X:</span><span>-198,90</span></div><div><span>Y:</span><span>1144,86</span></div></div>
  <label class="z">Z:</label><div class="entry zoom"><b>214%</b><i class="spin both"></i></div>
</footer>
<script src="app.js"></script>
</body>
</html>
```
FILE: styles.css
```css
* { box-sizing: border-box; }
body { margin: 0; width: 1920px; height: 1040px; overflow: hidden; display: flex; flex-direction: column; background: #efefef; font: 12px/16px "Noto Sans", "Open Sans", sans-serif; color: #000; letter-spacing: -0.25px; }
svg { display: block; flex: none; }
u { text-decoration: underline; text-underline-offset: 2px; }
i { font-style: normal; display: block; }
.defs { position: absolute; }
.on { background: #cce8ff; border: 1px solid #99d1ff; }

.titlebar { height: 22px; flex: none; background: #fff; display: flex; align-items: center; padding: 2px 0 0 2px; }
.title { margin: 0 auto 0 5px; letter-spacing: -0.42px; }
.winbtns { display: flex; gap: 34px; padding-right: 19px; margin-top: -4px; }
.menubar { height: 22px; flex: none; background: #fff; border-bottom: 1px solid #d9d9d9; padding: 4px 0 0 8px; display: grid; grid-template-columns: 52px 51px 66px 46px 49px 46px 36px 40px 61px 60px; white-space: nowrap; letter-spacing: -0.35px; }

.toolbar { height: 32px; flex: none; background: #fff; border-bottom: 1px solid #d0d0d0; display: grid; align-items: center; justify-items: center; padding-left: 2px;
  grid-template-columns: 26px 24px 27px 11px 26px 28px 10px 26px 27px 11px 28px 24px 29px 21px 16px 26px 26px 16px 17px 32px 7px 25px 56px 21px 55px 45px 9px 30px 24px 26px 10px 30px 22px 30px; }
.toolbar > svg, .toolbar .on svg { width: 16px; height: 16px; }
.vsep { width: 1px; height: 18px; background: #a8a8a8; }
.toolbar .on { width: 26px; height: 27px; padding: 5px 4px; }
.dim { color: #777; }
.entry { display: flex; height: 21px; align-items: stretch; }
.entry b { flex: 1; font-weight: 400; border: 1px solid #abadb3; border-right: 0; background: #fff; padding: 1px 0 0 4px; white-space: nowrap; line-height: 18px; }
.toolbar .entry { width: 55px; justify-self: start; }
.off b { background: #efefef; font-size: 11px; letter-spacing: -0.45px; }
.spin { width: 11px; flex: none; border: 1px solid #ccc; position: relative; margin-left: 1px; background: linear-gradient(#efefef 48%, #c4c4c4 48% 54%, #efefef 54%); }
.spin::before, .spin::after { content: ""; position: absolute; left: 2px; border: 2.5px solid transparent; }
.spin::before { top: 1px; border-bottom: 3px solid #777; }
.spin::after { bottom: 1px; border-top: 3px solid #777; }
.spin.up::before, .spin.both::before { border-bottom-color: #000; }
.spin.down::after, .spin.both::after { border-top-color: #000; }
.combo { display: flex; border: 1px solid #999; background: #fff; height: 20px; width: 43px; padding-left: 3px; line-height: 18px; justify-content: space-between; }
.combo svg { background: #e1e1e1; border-left: 1px solid #adadad; margin-top: -1px; }

.main { height: 902px; flex: none; display: grid; grid-template-columns: 34px 1378px 7px 440px 61px; }
.toolbox { background: #fff; padding: 2px 2px 0; display: grid; grid-auto-rows: 30px; align-content: start; }
.toolbox div { height: 29px; padding: 2px 3px; }
.toolbox .on { padding: 1px 2px; }
.toolbox svg { width: 24px; height: 24px; }
.editor { grid-column: 2; display: grid; grid-template-columns: 16px 1347px 15px; grid-template-rows: 15px 872px 15px; background: #efefef; }
.corner { display: flex; align-items: center; justify-content: center; }
.hruler, .vruler, .canvas { width: 100%; height: 100%; }
.hruler text { font: 9px "Noto Sans", sans-serif; fill: #4a4a5a; letter-spacing: -0.4px; }
.vruler text { font: 8px "Liberation Sans", sans-serif; fill: #3a3a5a; }
.canvas { background: #fff; }
.vscroll { display: flex; flex-direction: column; }
.vscroll i { height: 98px; background: #cdcdcd; margin: 271px 0 auto; }
.hscroll { display: flex; }
.hscroll i { width: 337px; background: #cdcdcd; margin: 0 auto 0 322px; }

.dock { grid-column: 4; border-left: 2px solid #000; border-top: 2px solid #000; margin-top: 1px; padding-right: 8px; background: #efefef; }
.dockhead { height: 22px; display: flex; align-items: center; border-bottom: 1px solid #999; padding-bottom: 1px; }
.dockhead span { margin: 0 auto 0 0; letter-spacing: -0.22px; }
.hb { margin-left: 11px; }
.tabs { display: flex; align-items: flex-end; padding: 5px 0 0 4px; height: 29px; }
.tab { display: flex; align-items: center; gap: 5px; height: 23px; border: 1px solid #d9d9d9; border-left: 0; padding-left: 4px; width: 52px; background: #f0f0f0; white-space: nowrap; letter-spacing: -0.2px; }
.tab:nth-child(3) { width: 68px; letter-spacing: -0.35px; }
.tab.cur { width: 57px; height: 24px; background: #fff; border-bottom: 0; border-left: 1px solid #d9d9d9; }
.sheet { margin: 0 0 0 4px; width: 427px; height: 253px; background: #fff; border: 1px solid #d9d9d9; border-top: 0; padding: 8px 7px 0 8px; }
.paints { display: flex; height: 29px; margin-left: -1px; }
.paints > div { width: 30px; height: 29px; display: flex; align-items: center; justify-content: center; }
.paints .q { font: 900 23px/29px "Open Sans", sans-serif; }
.paints .rule { width: 19px; }
.paints .q + .rule { margin-left: 132px; }
.flat { font-weight: 600; margin-top: 9px; height: 21px; letter-spacing: -0.45px; }
.modes { display: grid; grid-template-columns: repeat(4, 78px) 81px; gap: 4px; height: 21px; margin-bottom: 5px; }
.modes div { background: #e1e1e1; border: 1px solid #adadad; text-align: center; line-height: 20px; white-space: nowrap; letter-spacing: -0.35px; }
.modes .sel { background: #cce4f7; border-color: #005499; }
.slider { display: grid; grid-template-columns: 26px 317px 49px; height: 25px; }
.slider label { text-align: right; padding: 3px 9px 0 0; }
.slider .entry { margin-left: 9px; width: 50px; }
.bar { height: 21px; border: 1px solid #a0a0a0; border-top: 2px solid #000; border-right-color: #e8e8e8; border-bottom-color: #e8e8e8; display: flex; flex-direction: column; justify-content: space-between; align-items: flex-start; }
.bar.r { background: linear-gradient(90deg, #000 1%, #f00); }
.bar.g { background: linear-gradient(90deg, #000 1%, #0f0); }
.bar.b { background: linear-gradient(90deg, #000 1%, #00f); }
.bar.a { background: linear-gradient(90deg, transparent, #000), repeating-conic-gradient(#666 0 25%, #a0a0a0 0 50%) 0 3px/16px 16px; align-items: flex-end; }
.bar::before, .bar::after { content: ""; border: 3px solid transparent; }
.bar::before { border-top: 4px solid #777; border-bottom: 0; }
.bar::after { border-bottom: 4px solid #777; border-top: 0; }
.rgba { display: flex; align-items: center; margin-top: 28px; height: 28px; padding-left: 1px; }
.chip { background: #efefef; width: 16px; height: 26px; padding-top: 5px; margin-right: 4px; }
.drop { margin-left: 6px; }
.rgba label { margin-left: auto; letter-spacing: -0.6px; }
.rgba .entry { width: 56px; margin-left: 3px; }
.rgba .entry b { border-right: 1px solid #abadb3; padding-left: 3px; letter-spacing: -0.5px; }
.blur { display: flex; margin: 4px 0 0 4px; width: 427px; height: 24px; }
.blur div { flex: 1; border: 1px solid #abadb3; border-right: 0; background: #fff; display: flex; justify-content: space-between; padding: 2px 4px 0 5px; letter-spacing: -0.15px; }
.blur .spin { height: 22px; margin-top: 1px; }
.blur.full div { background: linear-gradient(#b6c3cc, #b6c3cc) 2px 2px/410px 18px no-repeat, linear-gradient(#000, #000) 2px 2px/411px 19px no-repeat, #fff; }
.dockend { height: 8px; border-bottom: 1px solid #fff; }

.side { grid-column: 5; background: #fff; border-left: 1px solid #ddd; display: grid; grid-template-columns: 30px 30px; padding-top: 2px; }
.cmds div, .snaps div { height: 26px; width: 26px; margin: 0 auto; padding: 5px; }
.snaps .on { height: 25px; margin-bottom: 1px; padding: 4px; }
.side svg { width: 16px; height: 16px; }
.side hr { width: 16px; height: 1px; border: 0; background: #a0a0a0; margin: 6px auto 5px; }

.palette { height: 19px; flex: none; border-top: 1px solid #a0a0a0; display: flex; background: #fff; border-bottom: 1px solid #ddd; margin-top: 1px; box-shadow: inset 0 1px #000; padding-top: 1px; padding-left: 1px; }
#swatches { width: 1893px; display: flex; overflow: hidden; height: 14px; }
#swatches i { width: 14px; flex: none; }
.palette svg:last-child { background: #efefef; margin-left: 2px; }
.palscroll { height: 14px; margin-top: 1px; flex: none; display: flex; }
.palscroll i { width: 591px; background: #cdcdcd; margin-right: auto; }
.palscroll svg:last-child { margin-right: 9px; }

.status { height: 27px; flex: none; display: flex; align-items: center; }
.fs { width: 39px; padding-left: 2px; line-height: 13px; display: grid; white-space: nowrap; letter-spacing: -0.45px; }
.black { width: 83px; height: 26px; background: #000; display: flex; justify-content: flex-end; align-items: flex-end; }
.black span { background: #efefef; width: 30px; height: 13px; line-height: 13px; text-align: right; letter-spacing: -0.5px; }
.ol { margin-left: 4px; width: 14px; }
.op { width: 47px; }
.vline { width: 1px; height: 27px; background: #aaa; margin: 0 7px 0 3px; }
.lk { margin-left: 9px; }
.eye { margin-top: -2px; }
.layer { width: 73px; height: 25px; margin-left: 6px; line-height: 24px; }
.layer b { font-weight: 700; font-size: 11px; }
.msg { margin: 0 auto 0 2px; letter-spacing: -0.42px; }
.coords { border-left: 1px solid #999; width: 71px; padding-left: 3px; font: 11.600px/13px "DejaVu Sans Mono", monospace; height: 27px; }
.coords div { display: grid; grid-template-columns: 11px 50px; letter-spacing: 0; white-space: nowrap; }
.coords span:first-child { letter-spacing: -2px; }
.z { width: 12px; }
.zoom { width: 57px; }
.zoom b { padding-left: 7px; letter-spacing: -0.5px; }
```
FILE: app.js
```js
// Default palette: greys, web basics, then four hue families of 27 tints.
const colours = `000000 1a1a1a 333333 4d4d4d 666666 808080 999999 b3b3b3 cccccc e6e6e6 ececec f2f2f2 f9f9f9 ffffff
800000 ff0000 808000 ffff00 008000 00ff00 008080 00ffff 000080 0000ff 800080 ff00ff
2b0000 550000 800000 aa0000 d40000 ff0000 ff2a2a ff5555 ff8080 ffaaaa ffd5d5 280b0b 501616 782121 a02c2c c83737 d35f5f de8787 e9afaf f4d7d7 241c1c 483737 6c5353 916f6f ac9393 c8b7b7 e3dbdb
2b1100 552200 803300 aa4400 d45500 ff6600 ff7f2a ff9955 ffb380 ffccaa ffe6d5 28170b 502d16 784421 a05a2c c87137 d38d5f deaa87 e9c6af f4e3d7 241f1c 483e37 6c5d53 917c6f ac9d93 c8beb7 e3dedb
2b2200 554400 806600 aa8800 d4aa00 ffcc00 ffd42a ffdd55 ffe680 ffeeaa fff6d5 28220b 504416 786721 a0892c c8ab37 d3bc5f decd87 e9ddaf f4eed7 24221c 484537 6c6753 918a6f aca793 c8c4b7 e3e2db
222b00 445500 668000 88aa00 aad400 ccff00 d4ff2a ddff55 e5ff80 eeffaa f6ffd5 22280b 445016 677821 89a02c abc837 bcd35f cdde87 dde9af eef4d7 22241c 454837 676c53 8a916f a7ac93 c4c8b7 e2e3db
112b00 225500`.split(/\s+/);
document.getElementById('swatches').innerHTML = colours.map(c => `<i style="background:#${c}"></i>`).join('');

// Horizontal ruler: one tick per 2.5 px units, a label every 25.
let h = '<path d="M50 90.500H1397" stroke="#000" stroke-width="1"/>';
for (let k = -91; k <= 159; k++) {
  const x = Math.floor(543.3 + k * 5.348) + 0.5;
  const top = k % 10 === 0 ? 79 : k % 2 === 0 ? 85 : 87;
  h += `<path d="M${x} ${top}V90" stroke="#000"/>`;
  if (k % 10 === 0) h += `<text x="${x + 2}" y="87">${k * 2.5}</text>`;
}
h += '<path d="M101 86h8l-4 4.500z"/>';
document.getElementById('hr').innerHTML = h;

// Vertical ruler: one tick per 5 units, digits stacked every 50.
let v = '<path d="M49.500 91V963" stroke="#000"/>';
for (let k = -4; k <= 76; k++) {
  const y = Math.floor(141.3 + k * 10.7) + 0.5;
  const left = k % 10 === 0 ? 38 : k % 2 === 0 ? 44 : 46;
  v += `<path d="M${left} ${y}H49" stroke="#000"/>`;
  if (k % 10 === 0) [...String(1150 - k * 5)].forEach((d, i) => { v += `<text x="38" y="${y + 8 + i * 8}">${d}</text>`; });
}
v += '<path d="M45 137v8l4.500-4z"/>';
document.getElementById('vr').innerHTML = v;

// Gears: one tooth outline, rotated around the centre.
const ring = (cx, cy, n, offset, tooth, core) => {
  let s = `<circle cx="${cx}" cy="${cy}" r="${core}"/>`;
  for (let i = 0; i < n; i++) s += `<path d="${tooth}" transform="translate(${cx} ${cy}) rotate(${offset + i * 360 / n})"/>`;
  return s;
};
const petal = 'M0 0L-11.200-34.500C-12-43-9-50.500-5.500-53Q0-54 5.500-53C9-50.500 12-43 11.200-34.500Z';
const tooth = 'M0-100L-12.500-158.500C-11.200-163-10.500-168-8.300-172Q-6-175-1-175.300Q5-175.500 7.500-172.500C10-168.500 11.200-163 12.500-158.500Z';
const flower = (x, y) => ring(x, y, 10, 0, petal, 34) + `<circle cx="${x}" cy="${y}" r="7.300" fill="#fff"/>`;
document.getElementById('gears').innerHTML =
  ring(744, 767.3, 40, 4.5, tooth, 157) +
  '<circle cx="744" cy="767.300" r="76.800" fill="#fff"/>' +
  '<path d="M740.700 646.500h6.600v6.600h-6.600zM740.700 881h6.600v6.600h-6.600zM623 764h6.600v6.600H623zM858 764h6.600v6.600H858z" fill="#fff"/>' +
  '<rect x="680" y="713.300" width="131.300" height="26" rx="4"/>' +
  flower(904.5, 431.5) + flower(622.7, 579.7) + flower(872.8, 590.5) + flower(745.7, 790.3);
```
